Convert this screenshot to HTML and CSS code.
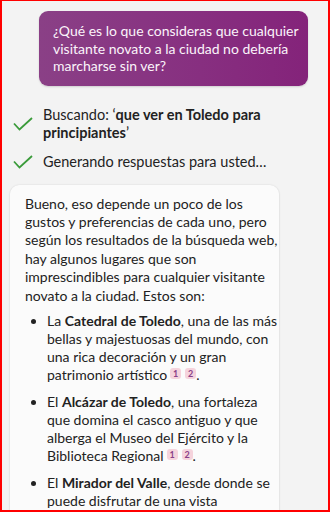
FILE: index.html
```html
<!DOCTYPE html>
<html lang="es">
<head>
<meta charset="utf-8">
<link rel="stylesheet" href="styles.css">
</head>
<body>
<div class="frame">
  <div class="user-row">
    <div class="user-bubble">¿Qué es lo que consideras que cualquier<br>visitante novato a la ciudad no debería<br>marcharse sin ver?</div>
  </div>
  <div class="status">
    <svg class="check" width="20" height="14" viewBox="0 0 20 14"><polyline points="1,6.5 6.5,12.5 19,1" fill="none" stroke="#3a9b3a" stroke-width="1.8"/></svg>
    <div class="status-text">Buscando: ‘<b>que ver en Toledo para<br>principiantes</b>’</div>
  </div>
  <div class="status status-2">
    <svg class="check" width="20" height="14" viewBox="0 0 20 14"><polyline points="1,6.5 6.5,12.5 19,1" fill="none" stroke="#3a9b3a" stroke-width="1.8"/></svg>
    <div class="status-text">Generando respuestas para usted…</div>
  </div>
  <div class="card">
    <p class="intro">Bueno, eso depende un poco de los<br>gustos y preferencias de cada uno, pero<br>según los resultados de la búsqueda web,<br>hay algunos lugares que son<br>imprescindibles para cualquier visitante<br>novato a la ciudad. Estos son:</p>
    <ul class="list">
      <li>La <b>Catedral de Toledo</b>, una de las más<br>bellas y majestuosas del mundo, con<br>una rica decoración y un gran<br>patrimonio artístico<span class="cite">1</span><span class="cite">2</span>.</li>
      <li>El <b>Alcázar de Toledo</b>, una fortaleza<br>que domina el casco antiguo y que<br>alberga el Museo del Ejército y la<br>Biblioteca Regional<span class="cite">1</span><span class="cite">2</span>.</li>
      <li>El <b>Mirador del Valle</b>, desde donde se<br>puede disfrutar de una vista<br>panorámica de la ciudad y del río Tajo.</li>
    </ul>
  </div>
</div>
</body>
</html>
```
FILE: styles.css
```css
html, body {
  margin: 0;
  padding: 0;
  height: 100%;
  overflow: hidden;
}
body {
  background: #f3f3f3;
  font-family: Lato, "Noto Sans", sans-serif;
  color: #222222;
}
.frame {
  box-sizing: border-box;
  height: 512px;
  overflow: hidden;
  border: 2px solid #f00;
  border-top-width: 1px;
  padding-top: 10px;
}
.user-row {
  display: flex;
  justify-content: flex-end;
  padding-right: 20px;
}
.user-bubble {
  width: 241px;
  padding: 11px 14px 11px 14px;
  border-radius: 9px;
  background: linear-gradient(90deg, #8a4086 0%, #872f80 60%, #84237a 100%);
  color: #fbf4fa;
  font-size: 14px;
  line-height: 17.5px;
  white-space: nowrap;
  box-shadow: 0 1px 2px rgba(0,0,0,0.15);
}
.status {
  display: flex;
  align-items: center;
  gap: 10px;
  padding-left: 11px;
  margin-top: 20px;
  font-size: 14.5px;
  line-height: 18px;
}
.status-2 {
  margin-top: 11px;
}
.check {
  flex: none;
}
.status-text {
  white-space: nowrap;
}
.status-text b {
  font-weight: 700;
}
.card {
  margin: 14px 49px 0 8px;
  background: #fbfbfb;
  border-radius: 9px;
  box-shadow: 0 0 2px rgba(0,0,0,0.12), 0 1px 2px rgba(0,0,0,0.08);
  padding: 10px 14px 10px 15px;
  font-size: 14px;
  line-height: 18.4px;
  white-space: nowrap;
}
.intro {
  margin: 0;
}
.list {
  margin: 7.5px 0 0 0;
  padding-left: 22px;
}
.list li {
  line-height: 18px;
  margin-bottom: 9px;
}
.cite {
  display: inline-block;
  width: 11px;
  height: 11px;
  line-height: 11px;
  margin-left: 3px;
  border-radius: 3px;
  background: #f5d3dc;
  color: #8a3f88;
  font-size: 9px;
  font-weight: 700;
  text-align: center;
  vertical-align: 3px;
}
.cite + .cite {
  margin-left: 4px;
}
```
